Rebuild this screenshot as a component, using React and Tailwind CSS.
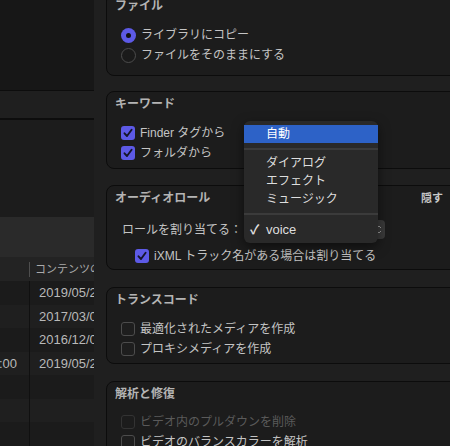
import React from 'react';

const FONT = { fontFamily: '"Liberation Sans", "Noto Sans CJK JP", sans-serif' };

const ROWS = [
  { time: '', date: '2019/05/21 11:32' },
  { time: '', date: '2017/03/08 9:14' },
  { time: '', date: '2016/12/02 18:40' },
  { time: '12:00:00', date: '2019/05/21 12:00' },
  { time: '', date: '' },
  { time: '', date: '' },
  { time: '', date: '' },
];

function Check({ on, disabled }) {
  if (on) {
    return (
      <span className="w-[14px] h-[14px] rounded-[3px] bg-[#5d5ae6] flex items-center justify-center shrink-0">
        <svg width="12" height="12" viewBox="0 0 12 12">
          <path d="M2.5 6.3 L5 9 L9.6 2.8" fill="none" stroke="#15152a" strokeWidth="1.9" strokeLinecap="round" strokeLinejoin="round" />
        </svg>
      </span>
    );
  }
  return (
    <span
      className={`w-[14px] h-[14px] rounded-[3px] border shrink-0 ${
        disabled ? 'border-[#333333] bg-[#1c1c1c]' : 'border-[#4c4c4c] bg-[#1e1e1e]'
      }`}
    />
  );
}

function Radio({ on }) {
  if (on) {
    return (
      <span className="w-[15px] h-[15px] rounded-full bg-[#5d5ae6] flex items-center justify-center shrink-0">
        <span className="w-[5px] h-[5px] rounded-full bg-[#111111]" />
      </span>
    );
  }
  return <span className="w-[15px] h-[15px] rounded-full border border-[#4c4c4c] bg-[#1a1a1a] shrink-0" />;
}

function Row({ children, className = '' }) {
  return <div className={`h-[20px] flex items-center gap-[5px] pl-[14px] ${className}`}>{children}</div>;
}

function Section({ title, extra, className, children }) {
  return (
    <div className={`w-[360px] shrink-0 border border-[#0c0c0c] rounded-[8px] bg-[#1c1c1c] ${className}`}>
      <div className="flex items-center justify-between pt-[4px] pl-[8px] pr-[22px]">
        <span className="text-[12px] leading-[16px] font-bold text-[#b4b4b4]">{title}</span>
        {extra}
      </div>
      {children}
    </div>
  );
}

function Sidebar() {
  return (
    <div className="w-[94px] shrink-0 flex flex-col overflow-hidden">
      <div className="h-[90px] bg-[#171717]" />
      <div className="h-[30px] bg-[#1f1f1f] border-t border-b-2 border-[#0d0d0d]" />
      <div className="h-[97px] bg-[#1c1c1c]" />
      <div className="h-[40px] bg-[#2a2a2a]" />
      <div className="h-[24px] bg-[#232323] flex items-center overflow-hidden">
        <div className="w-[30px] shrink-0 h-[15px] border-r border-[#4e4e4e]" />
        <span className="pl-[5px] text-[11px] text-[#aaaaaa] whitespace-nowrap">コンテンツの作成日</span>
      </div>
      {ROWS.map((r, i) => (
        <div
          key={i}
          className={`h-[23.5px] flex items-center text-[13px] text-[#b9b9b9] overflow-hidden ${
            i % 2 === 0 ? 'bg-[#1b1b1b]' : 'bg-[#1f1f1f]'
          }`}
        >
          <div className="w-[30px] shrink-0 h-full flex items-center justify-end pr-[12px] overflow-hidden border-r border-[#101010]">
            <span className="whitespace-nowrap">{r.time}</span>
          </div>
          <span className="pl-[9px] whitespace-nowrap">{r.date}</span>
        </div>
      ))}
    </div>
  );
}

function RoleMenu() {
  return (
    <div className="absolute left-[244px] top-[121px] w-[134px] rounded-[6px] bg-[#292929] py-[4px] shadow-[0_4px_12px_rgba(0,0,0,0.5)] text-[12px] text-[#dedede]">
      <div className="h-[18px] bg-[#2d62c7] text-white flex items-center pl-[22px]">自動</div>
      <div className="h-[11px] flex items-center">
        <div className="w-full h-[2px] bg-[#3b3b3b]" />
      </div>
      <div className="h-[18px] flex items-center pl-[22px]">ダイアログ</div>
      <div className="h-[18px] flex items-center pl-[22px]">エフェクト</div>
      <div className="h-[18px] flex items-center pl-[22px]">ミュージック</div>
      <div className="h-[12px] flex items-center">
        <div className="w-full h-[2px] bg-[#3b3b3b]" />
      </div>
      <div className="h-[19px] flex items-center pl-[22px] relative text-[13px]">
        <span className="absolute left-[6px] font-bold">✓</span>
        voice
      </div>
    </div>
  );
}

export default function App() {
  return (
    <div className="w-[450px] h-[446px] flex overflow-hidden bg-[#1f1f1f] relative" style={FONT}>
      <Sidebar />
      <div className="flex-1 flex flex-col pl-[12px] overflow-hidden text-[12px] text-[#c4c4c4]">
        <Section title="ファイル" className="mt-[-7px] h-[83px]">
          <div className="mt-[11px]">
            <Row><Radio on /><span>ライブラリにコピー</span></Row>
            <Row><Radio /><span>ファイルをそのままにする</span></Row>
          </div>
        </Section>

        <Section title="キーワード" className="mt-[15px] h-[78px]">
          <div className="mt-[11px]">
            <Row><Check on /><span>Finder タグから</span></Row>
            <Row><Check on /><span>フォルダから</span></Row>
          </div>
        </Section>

        <Section
          title="オーディオロール"
          className="mt-[16px] h-[85px]"
          extra={<span className="text-[11px] font-bold text-[#c8c8c8]">隠す</span>}
        >
          <div className="mt-[13px] h-[20px] flex items-center pl-[15px]">
            <span>ロールを割り当てる：</span>
            <div className="ml-[3px] w-[140px] h-[19px] rounded-[4px] bg-[#3a3a3a] flex items-center justify-end pr-[3px]">
              <svg width="6" height="11" viewBox="0 0 6 11">
                <path d="M1 4 L3 2 L5 4 M1 7 L3 9 L5 7" fill="none" stroke="#9a9a9a" strokeWidth="1" />
              </svg>
            </div>
          </div>
          <Row className="mt-[6px] pl-[28px]"><Check on /><span>iXML トラック名がある場合は割り当てる</span></Row>
        </Section>

        <Section title="トランスコード" className="mt-[17px] h-[77px]">
          <div className="mt-[11px]">
            <Row><Check /><span>最適化されたメディアを作成</span></Row>
            <Row><Check /><span>プロキシメディアを作成</span></Row>
          </div>
        </Section>

        <Section title="解析と修復" className="mt-[17px] h-[90px]">
          <div className="mt-[10px]">
            <Row><Check disabled /><span className="text-[#5a5a5a]">ビデオ内のプルダウンを削除</span></Row>
            <Row><Check /><span>ビデオのバランスカラーを解析</span></Row>
          </div>
        </Section>
      </div>
      <RoleMenu />
    </div>
  );
}
